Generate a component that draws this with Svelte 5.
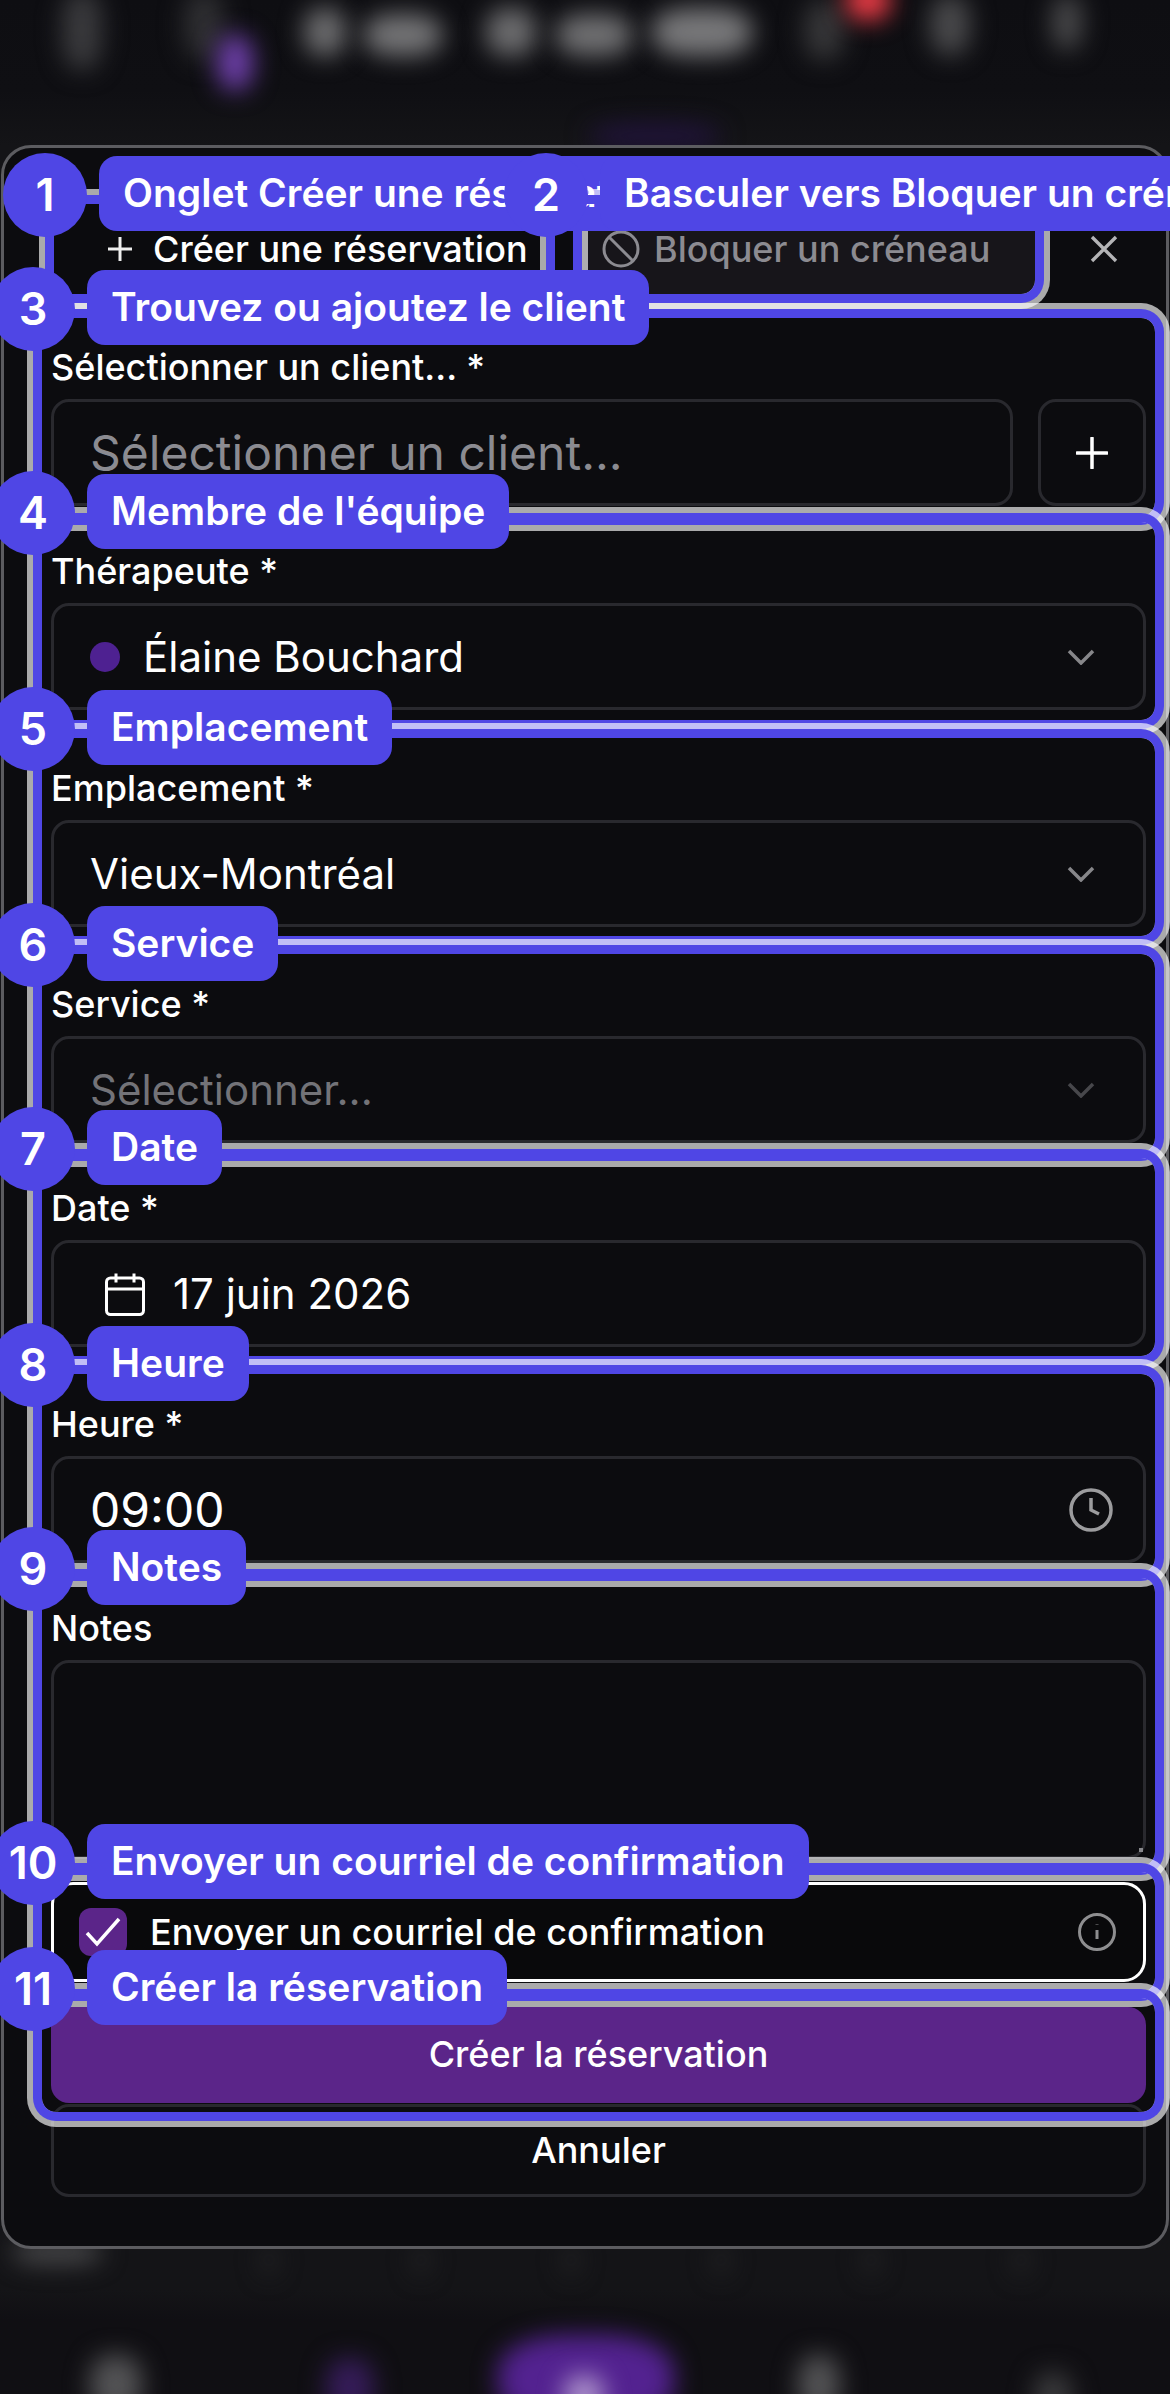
<script>
  const steps = [
    { n: 1, label: "Onglet Créer une réservation", x: 54, y: 204, w: 519, h: 90 },
    { n: 2, label: "Basculer vers Bloquer un créneau", x: 555, y: 204, w: 480, h: 90, cx: 546 },
    { n: 3, label: "Trouvez ou ajoutez le client", x: 42, y: 318, w: 1113, h: 198 },
    { n: 4, label: "Membre de l'équipe", x: 42, y: 522, w: 1113, h: 198 },
    { n: 5, label: "Emplacement", x: 42, y: 738, w: 1113, h: 198 },
    { n: 6, label: "Service", x: 42, y: 954, w: 1113, h: 198 },
    { n: 7, label: "Date", x: 42, y: 1158, w: 1113, h: 198 },
    { n: 8, label: "Heure", x: 42, y: 1374, w: 1113, h: 198 },
    { n: 9, label: "Notes", x: 42, y: 1578, w: 1113, h: 288 },
    { n: 10, label: "Envoyer un courriel de confirmation", x: 42, y: 1872, w: 1113, h: 120 },
    { n: 11, label: "Créer la réservation", x: 42, y: 1998, w: 1113, h: 114 }
  ];
  const blobs = [
    [62, -10, 40, 80, "#3a3a3d"], [184, -10, 40, 70, "#2f2f32"], [217, 35, 36, 55, "#6d3fa8"],
    [304, 8, 42, 48, "#6c6c6e"], [364, 14, 78, 42, "#747476"], [486, 8, 50, 48, "#6c6c6e"],
    [556, 14, 76, 42, "#707072"], [652, 8, 100, 48, "#78787a"], [804, 0, 40, 60, "#363638"],
    [846, -20, 44, 40, "#ee3c46"], [930, -5, 40, 60, "#4a4a4c"], [1052, -5, 30, 55, "#4a4a4c"],
    [590, 124, 130, 24, "#21133c"], [12, 2240, 90, 24, "#48484a"], [262, 2245, 14, 30, "#252527"],
    [414, 2245, 14, 30, "#252527"], [564, 2245, 14, 30, "#252527"], [714, 2245, 14, 30, "#252527"],
    [864, 2245, 14, 30, "#252527"], [1014, 2245, 14, 30, "#252527"], [498, 2335, 176, 90, "#532290"],
    [90, 2355, 52, 60, "#535355"], [326, 2358, 48, 60, "#351c58"], [798, 2355, 42, 60, "#535355"],
    [1034, 2372, 38, 50, "#3a3a3c"], [564, 2375, 40, 40, "#ad93cc"]
  ];
</script>

<div class="page">
  <div class="backdrop">
    {#each blobs as b}
      <div class="blob" style="left:{b[0]}px;top:{b[1]}px;width:{b[2]}px;height:{b[3]}px;background:{b[4]}"></div>
    {/each}
  </div>

  <section class="modal">
    <header class="head">
      <div class="tabs">
        <div class="tab active">
          <svg class="ic-tab" viewBox="0 0 28 28"><path d="M14 2v24M2 14h24" /></svg>
          <span>Créer une réservation</span>
        </div>
        <div class="tab muted">
          <svg class="ic-ban" viewBox="0 0 38 38"><circle cx="19" cy="19" r="17" /><path d="M7 7l24 24" /></svg>
          <span>Bloquer un créneau</span>
        </div>
      </div>
      <svg class="ic-x" viewBox="0 0 28 28"><path d="M2 2l24 24M26 2L2 26" /></svg>
    </header>

    <div class="field first">
      <div class="label">Sélectionner un client... *</div>
      <div class="combo">
        <div class="control grow"><span class="placeholder big">Sélectionner un client...</span></div>
        <div class="square">
          <svg class="ic-plus" viewBox="0 0 32 32"><path d="M16 1v30M1 16h30" /></svg>
        </div>
      </div>
    </div>

    <div class="field near">
      <div class="label">Thérapeute *</div>
      <div class="control">
        <i class="dot"></i><span class="value">Élaine Bouchard</span>
        <svg class="chev" viewBox="0 0 28 16"><path d="M2 2l12 12L26 2" /></svg>
      </div>
    </div>

    <div class="field wide">
      <div class="label">Emplacement *</div>
      <div class="control">
        <span class="value">Vieux-Montréal</span>
        <svg class="chev" viewBox="0 0 28 16"><path d="M2 2l12 12L26 2" /></svg>
      </div>
    </div>

    <div class="field far">
      <div class="label">Service *</div>
      <div class="control">
        <span class="placeholder dim">Sélectionner...</span>
        <svg class="chev faint" viewBox="0 0 28 16"><path d="M2 2l12 12L26 2" /></svg>
      </div>
    </div>

    <div class="field near">
      <div class="label">Date *</div>
      <div class="control date">
        <svg class="ic-cal" viewBox="0 0 40 44"><rect x="1.5" y="6" width="37" height="36.5" rx="4" /><path d="M1.5 17h37M11 1.5v9M29 1.5v9" /></svg>
        <span class="value">17 juin 2026</span>
      </div>
    </div>

    <div class="field far">
      <div class="label">Heure *</div>
      <div class="control">
        <span class="value time">09:00</span>
        <svg class="ic-clock" viewBox="0 0 44 44"><circle cx="22" cy="22" r="20" /><path d="M22 10v12l8 4" /></svg>
      </div>
    </div>

    <div class="field near">
      <div class="label">Notes</div>
      <div class="control notes"><i class="grip"></i></div>
    </div>

    <div class="checkrow">
      <span class="box">
        <svg viewBox="0 0 36 30"><path d="M2 16l10 11L34 2" /></svg>
      </span>
      <span class="checktext">Envoyer un courriel de confirmation</span>
      <svg class="ic-info" viewBox="0 0 38 38"><circle cx="19" cy="19" r="17.5" /><path d="M19 26v-9M19 11.5v.5" /></svg>
    </div>

    <div class="primary">Créer la réservation</div>
    <div class="secondary">Annuler</div>
  </section>

  <div class="tour">
    {#each steps as s}
      <div class="spot" style="left:{s.x}px;top:{s.y}px;width:{s.w}px;height:{s.h}px"></div>
      <div class="pill" style="left:{(s.cx ?? s.x - 9) + 54}px;top:{s.y - 48}px">{s.label}</div>
      <div class="num" style="left:{(s.cx ?? s.x - 9) - 42}px;top:{s.y - 51}px">{s.n}</div>
    {/each}
  </div>
</div>

<style>
  :global(body) {
    margin: 0;
    background: #121215;
  }
  .page {
    position: relative;
    width: 1170px;
    height: 2394px;
    padding: 145px 1px 0;
    box-sizing: border-box;
    overflow: hidden;
    font-family: Inter, "Noto Sans", sans-serif;
    color: #fff;
  }
  .backdrop {
    position: absolute;
    inset: 0;
    overflow: hidden;
    background: linear-gradient(#0e0e12 0, #0f0f13 90px, #141417 145px, #141417 2290px, #100f13 2320px);
  }
  .blob {
    position: absolute;
    border-radius: 40%;
    filter: blur(12px);
  }
  .modal {
    position: relative;
    box-sizing: border-box;
    height: 2104px;
    border: 3px solid #5c5c60;
    border-radius: 30px;
    background: #0c0c0f;
    padding: 56px 20px 0 47px;
  }
  .head {
    display: flex;
    align-items: center;
  }
  .tabs {
    display: flex;
    width: 981px;
    height: 90px;
    margin-left: 3px;
    border-radius: 14px;
    background: #17151a;
  }
  .tab {
    display: flex;
    align-items: center;
    font-size: 36px;
    font-weight: 500;
  }
  .tab.active {
    width: 519px;
    flex: none;
    padding-left: 52px;
    box-sizing: border-box;
    gap: 19px;
    background: #0b0b0e;
    border-radius: 14px;
  }
  .tab.muted {
    padding-left: 29px;
    gap: 14px;
    color: #8c8b91;
  }
  .ic-tab {
    width: 28px;
    height: 28px;
    fill: none;
    stroke: #eee;
    stroke-width: 3;
  }
  .ic-ban {
    width: 38px;
    height: 38px;
    fill: none;
    stroke: #8c8b91;
    stroke-width: 3;
  }
  .ic-x {
    width: 28px;
    height: 28px;
    margin-left: 55px;
    fill: none;
    stroke: #b4b4b6;
    stroke-width: 3.4;
  }
  .field {
    display: flex;
    flex-direction: column;
  }
  .first { margin-top: 49px; }
  .near { margin-top: 41px; }
  .far { margin-top: 53px; }
  .wide { margin-top: 54px; }
  .label {
    height: 48px;
    margin-bottom: 8px;
    line-height: 49px;
    font-size: 36px;
    font-weight: 500;
  }
  .combo {
    display: flex;
    gap: 25px;
  }
  .control {
    display: flex;
    align-items: center;
    box-sizing: border-box;
    height: 107px;
    padding: 0 36px;
    border: 3px solid #29292e;
    border-radius: 18px;
  }
  .grow { flex: 1; }
  .square {
    display: flex;
    align-items: center;
    justify-content: center;
    box-sizing: border-box;
    width: 108px;
    height: 107px;
    border: 3px solid #29292e;
    border-radius: 18px;
  }
  .ic-plus {
    width: 32px;
    height: 32px;
    fill: none;
    stroke: #fff;
    stroke-width: 3.5;
    stroke-linecap: round;
  }
  .placeholder.big {
    font-size: 48px;
    color: #8b8b91;
  }
  .placeholder.dim {
    font-size: 42px;
    color: #737378;
  }
  .value {
    font-size: 42px;
  }
  .time {
    font-size: 48px;
  }
  .dot {
    flex: none;
    width: 30px;
    height: 30px;
    margin-right: 23px;
    border-radius: 50%;
    background: #4e2191;
  }
  .chev {
    width: 28px;
    height: 16px;
    margin-left: auto;
    margin-right: 12px;
    fill: none;
    stroke: #87878a;
    stroke-width: 3.5;
  }
  .chev.faint { stroke: #47474b; }
  .date { padding-left: 51px; gap: 28px; }
  .ic-cal {
    width: 40px;
    height: 44px;
    fill: none;
    stroke: #fff;
    stroke-width: 3;
  }
  .ic-clock {
    width: 44px;
    height: 44px;
    margin-left: auto;
    margin-right: -6px;
    fill: none;
    stroke: #9c9c9e;
    stroke-width: 3.5;
  }
  .notes {
    position: relative;
    height: 199px;
  }
  .grip {
    position: absolute;
    right: 0;
    bottom: 4px;
    width: 4px;
    height: 4px;
    background: #88888c;
  }
  .checkrow {
    display: flex;
    align-items: center;
    box-sizing: border-box;
    height: 100px;
    margin-top: 23px;
    padding: 0 27px 0 25px;
    border: 3px solid #fff;
    border-radius: 22px;
    background: #09090b;
  }
  .box {
    display: flex;
    align-items: center;
    justify-content: center;
    width: 48px;
    height: 48px;
    border-radius: 12px;
    background: #5b2589;
  }
  .box svg {
    width: 36px;
    height: 30px;
    fill: none;
    stroke: #fff;
    stroke-width: 3.5;
  }
  .checktext {
    margin-left: 23px;
    font-size: 36px;
    font-weight: 500;
  }
  .ic-info {
    width: 38px;
    height: 38px;
    margin-left: auto;
    fill: none;
    stroke: #8e8e90;
    stroke-width: 3;
  }
  .primary {
    display: flex;
    align-items: center;
    justify-content: center;
    box-sizing: border-box;
    height: 96px;
    margin-top: 25px;
    padding-bottom: 2px;
    border-radius: 18px;
    background: #5b2589;
    font-size: 36px;
    font-weight: 500;
  }
  .secondary {
    display: flex;
    align-items: center;
    justify-content: center;
    box-sizing: border-box;
    height: 93px;
    margin-top: 1px;
    padding-bottom: 2px;
    border: 3px solid #29292e;
    border-radius: 18px;
    font-size: 36px;
    font-weight: 500;
  }
  .tour {
    position: absolute;
    inset: 0;
    pointer-events: none;
  }
  .spot {
    position: absolute;
    border-radius: 14px;
    box-shadow: 0 0 0 9px #4f46e5, 0 0 0 15px rgba(255, 255, 255, 0.65);
  }
  .pill {
    position: absolute;
    height: 75px;
    padding: 0 24px;
    border-radius: 18px;
    background: #4f46e5;
    line-height: 73px;
    font-size: 39px;
    font-weight: 600;
    white-space: nowrap;
  }
  .num {
    position: absolute;
    width: 84px;
    height: 84px;
    border-radius: 50%;
    background: #4f46e5;
    line-height: 84px;
    text-align: center;
    font-size: 45px;
    font-weight: 600;
  }
</style>
